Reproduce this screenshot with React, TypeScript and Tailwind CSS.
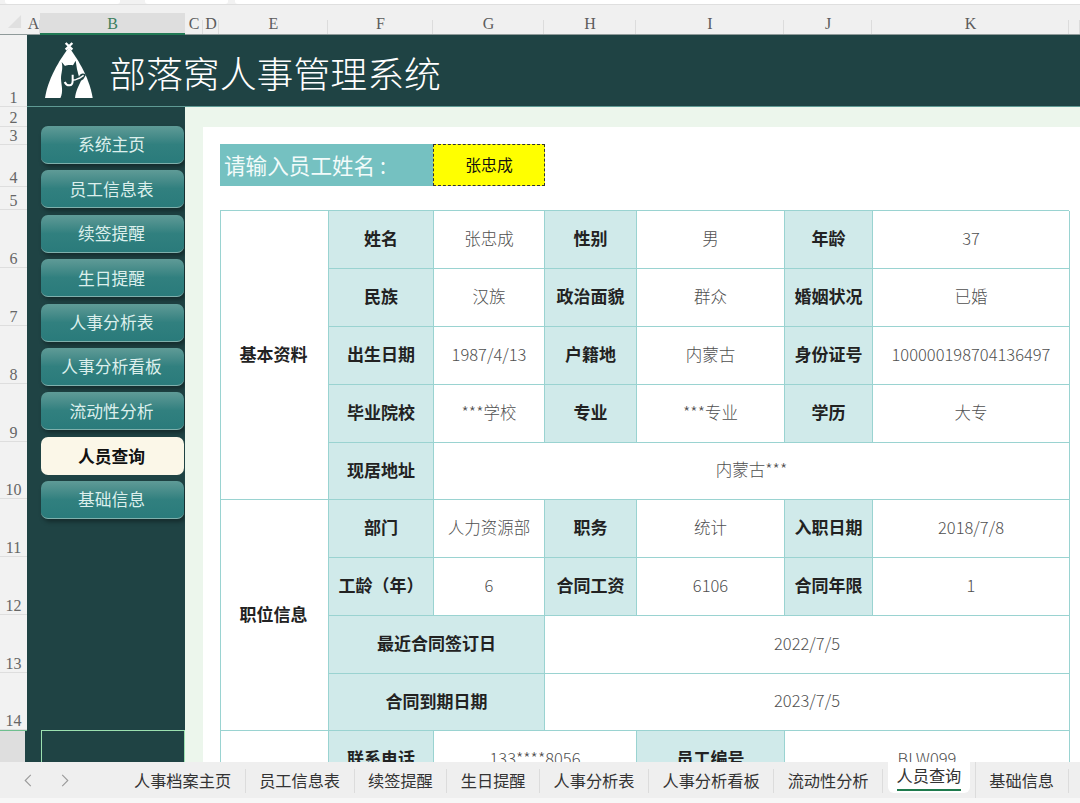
import React from "react";

const cjk = "[font-family:'Noto_Sans_CJK_SC','Noto_Sans',sans-serif]";

const columns: [string, number][] = [
  ["A", 13], ["B", 145], ["C", 18], ["D", 16], ["E", 109], ["F", 105], ["G", 111],
  ["H", 92], ["I", 148], ["J", 88], ["K", 197], ["", 11],
];
const rows: [string, number][] = [
  ["1", 72], ["2", 20], ["3", 18], ["4", 42], ["5", 23], ["6", 58], ["7", 58], ["8", 58],
  ["9", 58], ["10", 57], ["11", 58], ["12", 58], ["13", 58], ["14", 57],
];
const menu = ["系统主页", "员工信息表", "续签提醒", "生日提醒", "人事分析表", "人事分析看板", "流动性分析", "人员查询", "基础信息"];
const tabs = ["人事档案主页", "员工信息表", "续签提醒", "生日提醒", "人事分析表", "人事分析看板", "流动性分析", "人员查询", "基础信息"];

function Label({ children, className = "" }: { children: React.ReactNode; className?: string }) {
  return (
    <div className={`flex items-center justify-center pb-[3px] bg-[#d0eaea] border-r border-b border-[#9ad3d1] text-[17px] font-bold text-[#222] ${className}`}>
      {children}
    </div>
  );
}
function Value({ children, className = "" }: { children: React.ReactNode; className?: string }) {
  return (
    <div className={`flex items-center justify-center pb-[3px] bg-white border-r border-b border-[#9ad3d1] text-[16.5px] font-light text-[#4f4f4f] ${className}`}>
      {children}
    </div>
  );
}
function Head({ children, className = "" }: { children?: React.ReactNode; className?: string }) {
  return (
    <div className={`flex items-center justify-center pb-[3px] pr-[2px] bg-white border-r border-b border-[#9ad3d1] text-[17px] font-bold text-[#222] ${className}`}>
      {children}
    </div>
  );
}

function Logo() {
  return (
    <svg viewBox="0 0 240 210" className="w-[80px] h-[70px] shrink-0" aria-hidden="true">
      <path d="M107 21 L127 41 M127 21 L107 41" stroke="#fff" strokeWidth="7" />
      <path d="M117 34 C98 60 56 118 45 186 L188 186 C177 118 136 60 117 34 Z" fill="#fff" />
      <path
        d="M95 78 L105 90 C112 86 122 86 129 88 L137 74 L141 100 C144 110 145 116 147 122 C151 112 159 110 168 116 L160 130 L153 134 C146 150 137 165 135 187 L91 187 C101 165 94 150 93 128 C93 110 100 100 95 78 Z"
        fill="#1f4344"
      />
      <path d="M128 116 L128 134 C128 152 111 152 104 138" stroke="#fff" strokeWidth="6" fill="none" />
      <path d="M128 132 C136 134 143 127 151 125 L161 118" stroke="#fff" strokeWidth="4.5" fill="none" />
    </svg>
  );
}

export default function App() {
  return (
    <div className={`flex flex-col w-[1080px] h-[803px] overflow-hidden bg-white ${cjk}`}>
      {/* Top strip */}
      <div className="flex h-[5px] shrink-0 bg-[#f2f2f2] border-b border-[#dfdfdf]">
        <div className="ml-[5px] w-[115px] bg-white rounded-b-[3px]" />
        <div className="ml-[25px] w-[83px] bg-white rounded-b-[3px]" />
        <div className="ml-[7px] flex-1 bg-white rounded-bl-[3px]" />
      </div>

      {/* Column header */}
      <div className="flex h-[30px] shrink-0 bg-[#f0f0f0] border-b border-[#8f9a9a]">
        <div className="flex items-center justify-center w-[27px] shrink-0 pt-[3px] pl-[2px]">
          <svg viewBox="0 0 16 16" className="w-[15px] h-[15px]">
            <path d="M15 1 L15 15 L1 15 Z" fill="#e0e0e0" />
          </svg>
        </div>
        {columns.map(([name, width], i) => (
          <div
            key={i}
            style={{ width }}
            className={`relative flex items-end justify-center shrink-0 text-[16px] leading-[18px] [font-family:'Liberation_Serif',serif] ${
              name === "B"
                ? "mt-[8px] bg-[#dedede] text-[#3c7f5d] border-b-2 border-[#217a55] -mb-px"
                : "pb-[1px] text-[#5c5c5c] after:absolute after:right-0 after:bottom-0 after:h-[14px] after:w-px after:bg-[#dcdcdc]"
            }`}
          >
            {name}
          </div>
        ))}
      </div>

      {/* Sheet */}
      <div className="flex flex-1 min-h-0">
        <div className="flex flex-col w-[27px] shrink-0 bg-[#f2f2f2]">
          {rows.map(([name, height]) => (
            <div
              key={name}
              style={{ height }}
              className="flex items-end justify-center shrink-0 border-b border-[#dedede] text-[16px] leading-[17px] text-[#666] [font-family:'Liberation_Serif',serif]"
            >
              {name}
            </div>
          ))}
          <div className="flex-1 bg-[#1f4344] border-t border-[#6fbf8f]">
            <div className="h-full w-[25px] bg-[#dedede]" />
          </div>
        </div>

        <div className="flex flex-col flex-1 min-w-0">
          {/* Banner */}
          <div className="flex items-center h-[72px] shrink-0 bg-[#1f4344] pl-[3px] border-b border-[#5f9a94]">
            <Logo />
            <div className="ml-[-1px] pt-[5px] text-[36.9px] font-light text-white whitespace-nowrap">部落窝人事管理系统</div>
          </div>

          <div className="flex flex-1 min-h-0">
            {/* Sidebar */}
            <div className="flex flex-col w-[158px] shrink-0 bg-[#1f4344] pt-[19px] pl-[14px]">
              <div className="flex flex-col gap-[6.375px]">
                {menu.map((item) => (
                  <div
                    key={item}
                    className={
                      item === "人员查询"
                        ? "flex items-center justify-center w-[143px] h-[38px] rounded-[7px] pr-[2px] pt-px bg-[#fbf7e8] text-[16.8px] font-bold text-[#111]"
                        : "flex items-center justify-center w-[143px] h-[38px] rounded-[7px] pr-[2px] pt-px bg-gradient-to-b from-[#5f9b97] via-[#31807f] to-[#2a7b7b] border-b border-[#7fb0ac] shadow-[2px_3px_4px_rgba(0,0,0,0.35)] text-[16.8px] text-[#dcefec]"
                    }
                  >
                    {item}
                  </div>
                ))}
              </div>
              <div className="mt-[211px] h-[60px] w-[144px] shrink-0 border border-[#9be0b0]" />
            </div>

            {/* Content */}
            <div className="flex flex-col flex-1 min-w-0 bg-[#ecf6ec]">
              <div className="flex flex-1 min-h-0 pl-[18px] pt-[20px]">
                <div className="flex-1 min-w-0 bg-white pl-[17px] pt-[17px] overflow-hidden">
                  <div className="flex h-[42px] w-[325px]">
                    <div className="flex items-center w-[213px] bg-[#75c1c1] pl-[4px] text-[21.6px] text-[#f2fbfa] whitespace-nowrap">
                      请输入员工姓名 :
                    </div>
                    <div className="flex items-center justify-center w-[112px] bg-[#ffff00] border border-dashed border-[#333] text-[15.8px] text-[#111]">
                      张忠成
                    </div>
                  </div>

                  <div className="mt-[24px] grid w-[849px] grid-cols-[108px_105px_111px_92px_148px_88px_197px] grid-rows-[58px_58px_58px_58px_57px_58px_58px_58px_57px_58px] border-l border-t border-[#9ad3d1]">
                    <Head className="row-span-5">基本资料</Head>
                    <Label>姓名</Label>
                    <Value>张忠成</Value>
                    <Label>性别</Label>
                    <Value>男</Value>
                    <Label>年龄</Label>
                    <Value>37</Value>

                    <Label>民族</Label>
                    <Value>汉族</Value>
                    <Label>政治面貌</Label>
                    <Value>群众</Value>
                    <Label>婚姻状况</Label>
                    <Value>已婚</Value>

                    <Label>出生日期</Label>
                    <Value>1987/4/13</Value>
                    <Label>户籍地</Label>
                    <Value>内蒙古</Value>
                    <Label>身份证号</Label>
                    <Value>100000198704136497</Value>

                    <Label>毕业院校</Label>
                    <Value>***学校</Value>
                    <Label>专业</Label>
                    <Value>***专业</Value>
                    <Label>学历</Label>
                    <Value>大专</Value>

                    <Label>现居地址</Label>
                    <Value className="col-span-5">内蒙古***</Value>

                    <Head className="row-span-4">职位信息</Head>
                    <Label>部门</Label>
                    <Value>人力资源部</Value>
                    <Label>职务</Label>
                    <Value>统计</Value>
                    <Label>入职日期</Label>
                    <Value>2018/7/8</Value>

                    <Label>工龄（年）</Label>
                    <Value>6</Value>
                    <Label>合同工资</Label>
                    <Value>6106</Value>
                    <Label>合同年限</Label>
                    <Value>1</Value>

                    <Label className="col-span-2">最近合同签订日</Label>
                    <Value className="col-span-4">2022/7/5</Value>

                    <Label className="col-span-2">合同到期日期</Label>
                    <Value className="col-span-4">2023/7/5</Value>

                    <Head />
                    <Label>联系电话</Label>
                    <Value className="col-span-2">133****8056</Value>
                    <Label>员工编号</Label>
                    <Value className="col-span-2">BLW099</Value>
                  </div>
                </div>
              </div>
            </div>
          </div>
        </div>
      </div>

      {/* Sheet tabs */}
      <div className="relative flex flex-col h-[41px] shrink-0 bg-[#f7f7f7]">
        <div className="flex items-center h-[36px] bg-[#efefef] text-[16.2px] text-[#333]">
          <div className="flex items-center w-[120.5px] shrink-0 pl-[24px] gap-[29px] text-[#9a9a9a]">
            <svg viewBox="0 0 8 14" className="w-[8px] h-[13px]" fill="none" stroke="currentColor" strokeWidth="1.2">
              <path d="M7 1 L1 7 L7 13" />
            </svg>
            <svg viewBox="0 0 8 14" className="w-[8px] h-[13px]" fill="none" stroke="currentColor" strokeWidth="1.2">
              <path d="M1 1 L7 7 L1 13" />
            </svg>
          </div>
          {tabs.map((tab) =>
            tab === "人员查询" ? (
              <div key={tab} className="flex h-[36px] px-[4.5px] border-r border-[#dcdcdc] items-start">
                <div className="flex items-start h-[31px] px-[9px] bg-white rounded-b-[6px]">
                  <span className="block mt-[1px] h-[28px] leading-[24px] border-b-2 border-[#1f7a4d]">{tab}</span>
                </div>
              </div>
            ) : (
              <div key={tab} className="flex items-center h-[24px] px-[13.5px] border-r border-[#dcdcdc] whitespace-nowrap mt-[1px]">
                {tab}
              </div>
            )
          )}
        </div>
      </div>
    </div>
  );
}
